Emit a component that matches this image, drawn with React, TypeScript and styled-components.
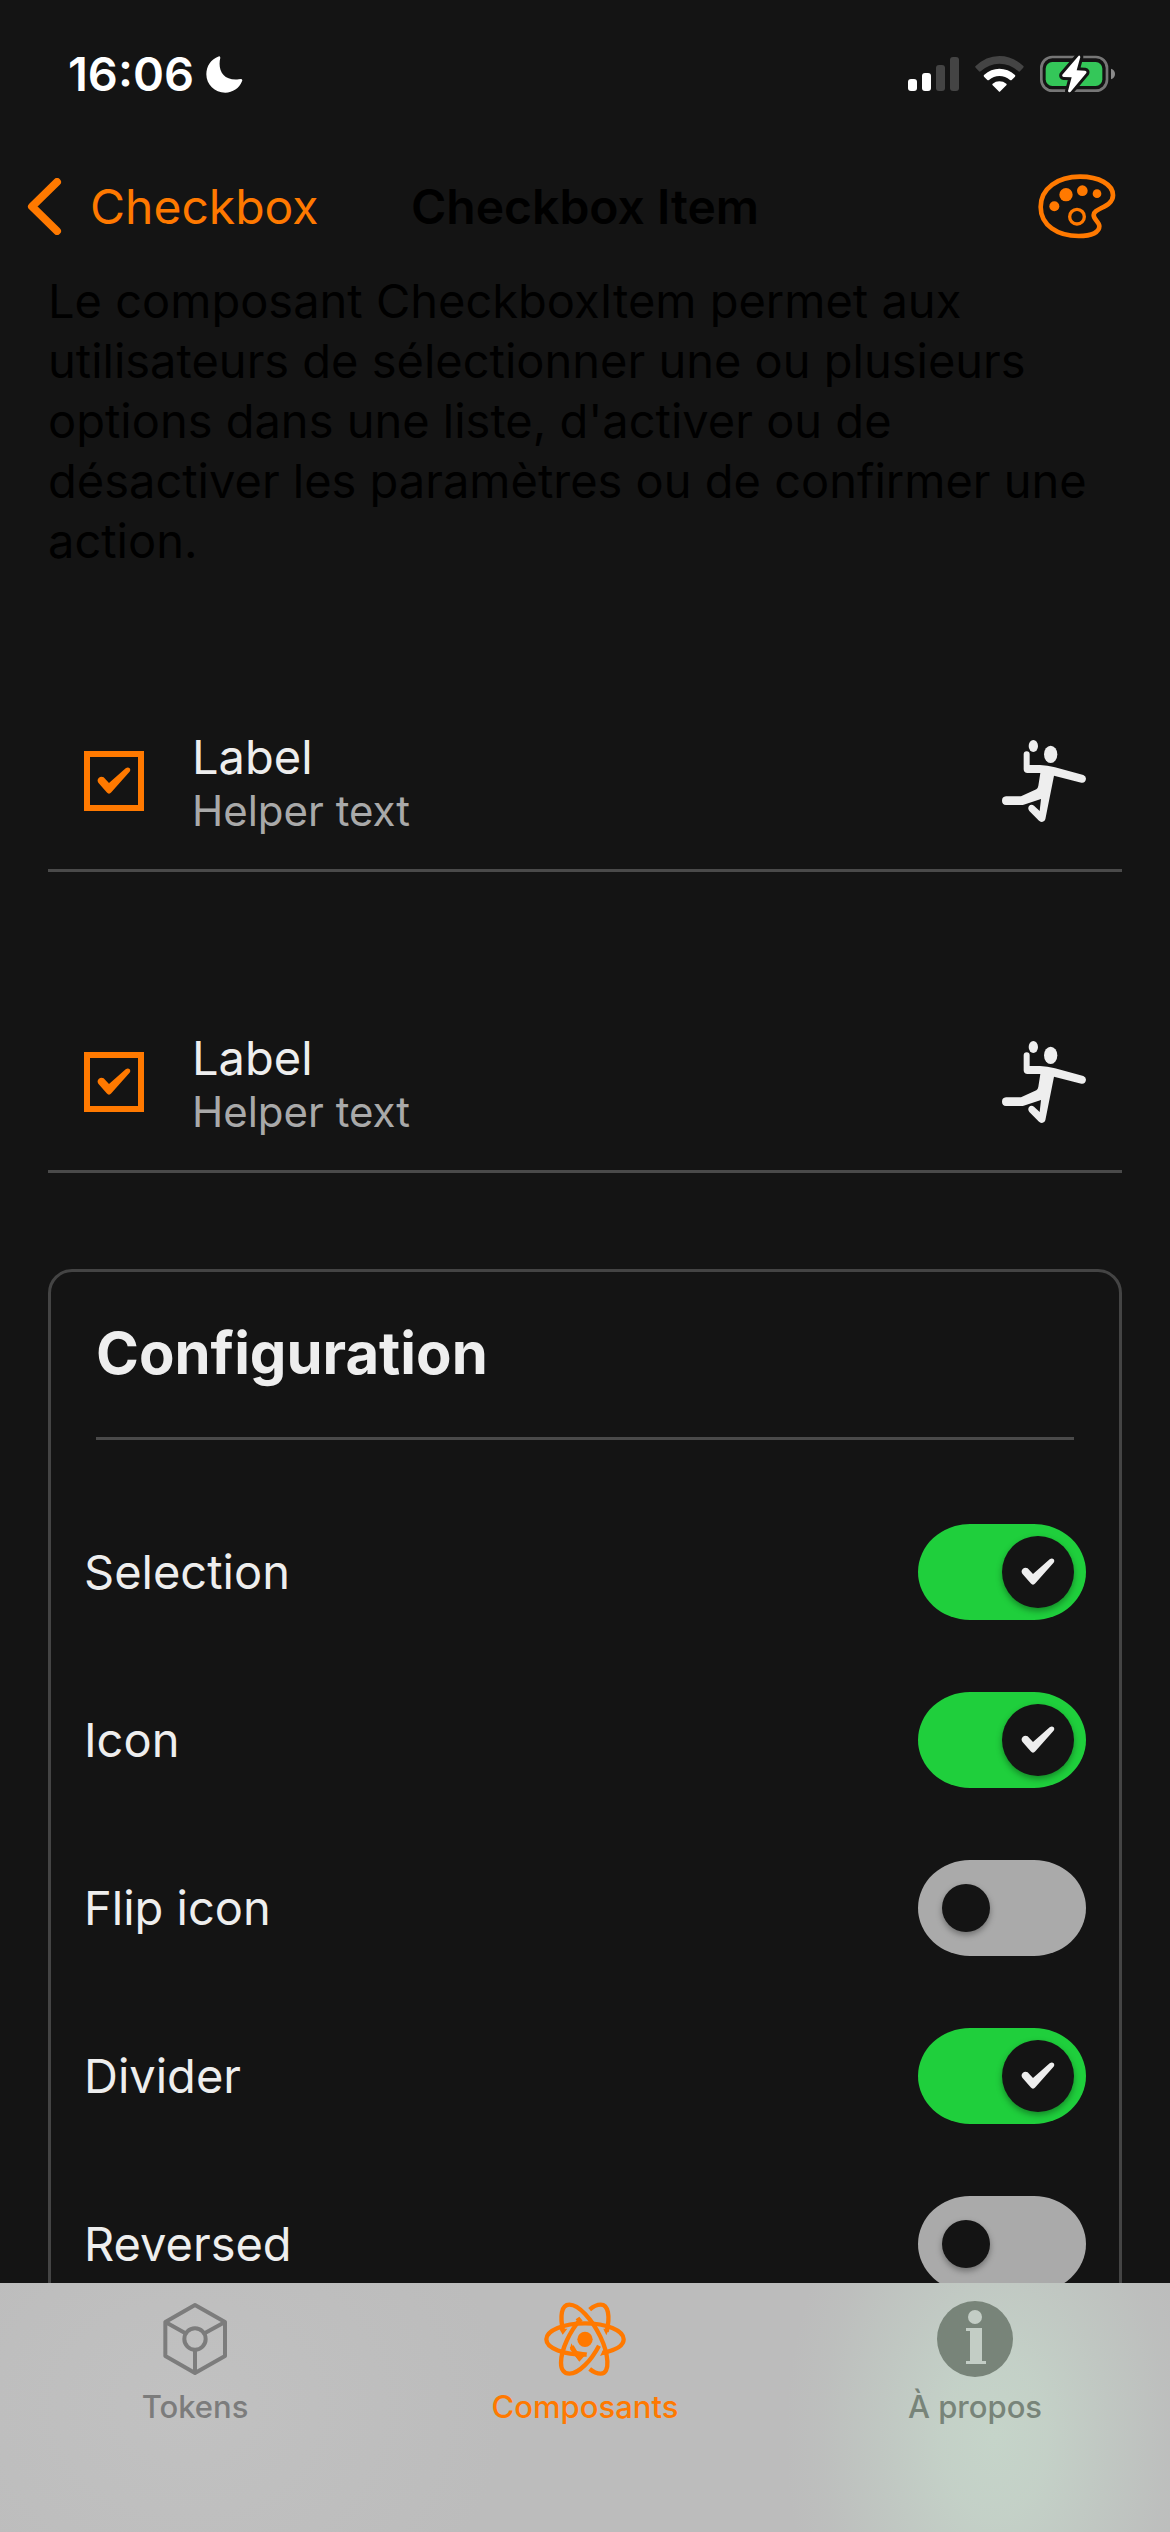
import React, { useState } from "react";
import styled, { createGlobalStyle } from "styled-components";

const color = {
  background: "#141414",
  content: "#eeeeee",
  muted: "#a9a9a9",
  divider: "#4a4a4a",
  border: "#444444",
  accent: "#ff7900",
  positive: "#1fcf3c",
  off: "#aaaaaa",
  tab: "#7c7c7c",
  tabOnGlow: "#788479",
};

const GlobalStyle = createGlobalStyle`
  *, *::before, *::after { box-sizing: border-box; }
  body {
    margin: 0;
    background: ${color.background};
    font-family: Inter, "Liberation Sans", sans-serif;
  }
  h1, h2, p { margin: 0; }
`;

const Screen = styled.div`
  display: flex;
  flex-direction: column;
  height: 100vh;
  overflow: hidden;
  background: ${color.background};
`;

const StatusBar = styled.header`
  display: flex;
  justify-content: space-between;
  align-items: center;
  padding: 44px 54px 0 68px;
  height: 104px;
`;

const StatusGroup = styled.div<{ $gap: number }>`
  display: flex;
  align-items: center;
  gap: ${(p) => p.$gap}px;
`;

const Clock = styled.time`
  color: #ffffff;
  font-size: 47px;
  font-weight: 600;
  line-height: 60px;
`;

const NavBar = styled.nav`
  display: grid;
  grid-template-columns: 1fr auto 1fr;
  align-items: center;
  height: 167px;
  padding: 38px 27px 0;
`;

const BackLink = styled.a`
  display: flex;
  align-items: center;
  gap: 28px;
  justify-self: start;
  color: ${color.accent};
  font-size: 48px;
  line-height: 60px;
  text-decoration: none;
`;

const PageTitle = styled.h1`
  color: #000000;
  font-size: 48px;
  font-weight: 600;
  line-height: 60px;
  white-space: nowrap;
`;

const ThemeButton = styled.button`
  justify-self: end;
  display: flex;
  margin-right: 27px;
  padding: 0;
  border: 0;
  background: none;
  cursor: pointer;
`;

const Content = styled.main`
  flex: 1;
  min-height: 0;
  overflow: hidden;
  padding: 0 48px;
`;

const Intro = styled.p`
  color: #000000;
  font-size: 47px;
  line-height: 60px;
`;

const ItemList = styled.div`
  display: flex;
  flex-direction: column;
  gap: 96px;
  padding: 96px 0;
`;

const Item = styled.label`
  display: flex;
  align-items: center;
  gap: 48px;
  height: 205px;
  padding: 26px 36px 0;
  border-bottom: 3px solid ${color.divider};
  cursor: pointer;
`;

const CheckStack = styled.span`
  display: grid;
  place-items: center;

  > * { grid-area: 1 / 1; }
  > svg { pointer-events: none; }
`;

const CheckInput = styled.input`
  appearance: none;
  width: 60px;
  height: 60px;
  margin: 0;
  border: 6px solid ${color.accent};
`;

const ItemText = styled.span`
  display: flex;
  flex: 1;
  flex-direction: column;
`;

const ItemLabel = styled.span`
  color: ${color.content};
  font-size: 47px;
  line-height: 60px;
`;

const ItemHelper = styled.span`
  color: ${color.muted};
  font-size: 42px;
  line-height: 48px;
`;

const Card = styled.section`
  border: 3px solid ${color.border};
  border-radius: 24px;
  padding: 45px 33px;
`;

const CardTitle = styled.h2`
  margin: 0 12px 48px;
  padding-bottom: 48px;
  border-bottom: 3px solid ${color.divider};
  color: ${color.content};
  font-size: 58px;
  font-weight: 700;
  line-height: 72px;
`;

const SwitchRow = styled.label`
  display: flex;
  align-items: center;
  justify-content: space-between;
  height: 168px;
  color: ${color.content};
  font-size: 47px;
  line-height: 60px;
  cursor: pointer;
`;

const SwitchStack = styled.span`
  display: grid;
  align-items: center;

  > * { grid-area: 1 / 1; }
`;

const SwitchInput = styled.input`
  appearance: none;
  width: 168px;
  height: 96px;
  margin: 0;
  border-radius: 52px / 48px;
  background: ${color.off};

  &:checked { background: ${color.positive}; }
`;

const Thumb = styled.span<{ $on: boolean }>`
  display: flex;
  align-items: center;
  justify-content: center;
  justify-self: ${(p) => (p.$on ? "end" : "start")};
  width: ${(p) => (p.$on ? 72 : 48)}px;
  height: ${(p) => (p.$on ? 72 : 48)}px;
  margin: 0 ${(p) => (p.$on ? 12 : 24)}px;
  border-radius: 50%;
  background: ${color.background};
  box-shadow: 0 3px 6px rgba(0, 0, 0, 0.35);
  pointer-events: none;
`;

const TabBar = styled.nav`
  display: grid;
  grid-template-columns: repeat(3, 1fr);
  flex: none;
  height: 249px;
  background:
    radial-gradient(
      ellipse 210px 320px at 85% 62%,
      rgba(197, 212, 201, 1) 0%,
      rgba(197, 212, 201, 0.85) 25%,
      rgba(197, 212, 201, 0.45) 55%,
      rgba(197, 212, 201, 0.12) 82%,
      rgba(197, 212, 201, 0) 100%
    ),
    radial-gradient(ellipse 320px 260px at 16% 50%, #c1c1c1 0%, rgba(193, 193, 193, 0) 100%),
    #bcbcbc;
`;

const Tab = styled.a<{ $tint: string }>`
  display: flex;
  flex-direction: column;
  align-items: center;
  gap: 12px;
  padding-top: 18px;
  color: ${(p) => p.$tint};
  font-size: 31px;
  font-weight: 500;
  line-height: 36px;
  text-decoration: none;
`;

const MoonIcon = () => (
  <svg width="37" height="37" viewBox="0 0 111 111" fill="#fff" aria-hidden="true">
    <path d="M36 2Q42-1 43 5C34 42 52 75 98 70Q101 69 104 69Q111 69 108 76C100 97 80 110 58 110C26 110 1 86 1 55C1 30 15 10 36 2Z" />
  </svg>
);

const SignalIcon = () => (
  <svg width="51" height="34" viewBox="0 0 51 34" aria-hidden="true">
    <rect x="0" y="22" width="9" height="12" rx="3" fill="#fff" />
    <rect x="14" y="16" width="9" height="18" rx="3" fill="#fff" />
    <rect x="28" y="8" width="9" height="26" rx="3" fill="#444" />
    <rect x="42" y="0" width="9" height="34" rx="3" fill="#444" />
  </svg>
);

const WifiIcon = () => (
  <svg width="49" height="36" viewBox="344 75 147 108" aria-hidden="true">
    <path d="M345 106Q377 75 417 75Q458 75 490 106Q490 109 488 111L479 121Q477 123 474 121Q449 98 417 98Q386 98 361 121Q358 123 356 121L346 110Q344 108 345 106Z" fill="#444" />
    <path d="M371 132Q392 113 417 113Q443 113 464 132Q466 134 464 137L454 147Q452 149 449 147Q435 135 417 135Q400 135 386 147Q383 149 381 147L371 137Q369 134 371 132Z" fill="#fff" />
    <path d="M397 158Q406 151 417 151Q429 151 438 158Q440 160 438 163L420 181Q417 184 415 181L397 163Q395 160 397 158Z" fill="#fff" />
  </svg>
);

const BatteryIcon = () => (
  <svg width="76" height="38" viewBox="540 75 228 114" aria-hidden="true">
    <rect x="544" y="81" width="197" height="101" rx="33" fill="none" stroke="#767676" strokeWidth="8" />
    <path d="M753 116Q765 120 765 132Q765 144 753 148Z" fill="#8a8a8a" />
    <rect x="557" y="96" width="170" height="72" rx="20" fill="#34c759" />
    <path d="M656 77L607 134Q605 140 611 141L635 142L624 183Q626 190 632 185L679 129Q681 123 675 122L650 121L661 81Q660 75 656 77Z" fill="#fff" stroke={color.background} strokeWidth="18" strokeLinejoin="round" paintOrder="stroke" />
  </svg>
);

const ChevronIcon = () => (
  <svg width="35" height="57" viewBox="0 0 35 57" fill="none" aria-hidden="true">
    <path d="M30 4L5 28.5L30 53" stroke={color.accent} strokeWidth="8" strokeLinecap="round" strokeLinejoin="round" />
  </svg>
);

const PaletteIcon = () => (
  <svg width="78" height="65" viewBox="533 434 234 195" fill={color.accent} aria-hidden="true">
    <path d="M659 442C592 442 541 477 541 533C541 588 592 620 655 620C696 620 717 608 717 591C717 577 700 571 700 557C700 536 758 534 758 498C758 465 716 442 659 442Z" fill="none" stroke={color.accent} strokeWidth="14" />
    <circle cx="582" cy="531" r="15" />
    <circle cx="617" cy="496" r="20" />
    <circle cx="666" cy="484" r="16" />
    <circle cx="710" cy="493" r="13" />
    <circle cx="650" cy="562" r="22" fill="none" stroke={color.accent} strokeWidth="10" />
  </svg>
);

const TickIcon = ({ fill }: { fill: string }) => (
  <svg width="34" height="28" viewBox="172 202 102 84" fill={fill} aria-hidden="true">
    <path d="M192 233L208 250L258 206Q265 201 270 206Q274 211 269 217L215 278Q208 286 201 278L176 249Q171 242 177 235Q184 228 192 233Z" />
  </svg>
);

const HandballIcon = () => (
  <svg width="84" height="84" viewBox="126 86 252 252" fill={color.content} aria-hidden="true">
    <ellipse cx="220" cy="107" rx="14" ry="18" />
    <ellipse cx="272" cy="132" rx="20" ry="26" />
    <path d="M191 132Q191 123 200 123Q209 123 209 132V164H240Q262 165 285 171L370 194Q378 197 378 205Q376 219 364 217L282 196L256 327Q254 335 246 335Q242 335 237 331L208 302Q202 295 207 287Q214 280 222 286L239 302L243 266L191 283Q188 284 184 284H138Q126 283 126 271Q126 259 138 258H183L229 237Q234 233 235 226L241 188H203Q191 188 191 177Z" />
  </svg>
);

const CubeIcon = () => (
  <svg width="76" height="76" viewBox="104 66 228 228" fill="none" stroke="currentColor" strokeWidth="12" strokeLinejoin="round" aria-hidden="true">
    <path d="M218 78L308 129V231L218 282L129 231V129ZM129 129L188 162M308 129L248 162M218 214V282" />
    <circle cx="218" cy="180" r="32" />
  </svg>
);

const AtomIcon = () => (
  <svg width="84" height="76" viewBox="69 65 252 228" fill="none" stroke="currentColor" strokeWidth="13" aria-hidden="true">
    <path d="M200 226C131 227 79 207 79 180C79 153 131 132 195 132C259 132 311 153 311 180C311 199 286 213 248 221" />
    <path d="M129 155C120 112 123 76 148 76C177 76 216 121 241 172C265 222 273 283 242 283Q226 283 209 269" />
    <path d="M181 120C150 155 123 211 123 250C123 272 133 283 148 283C177 283 214 243 237 199" />
    <path d="M209 91Q226 76 242 76C265 76 271 110 260 157" />
    <path d="M155 201Q164 219 181 239" />
    <g fill="currentColor" stroke="none">
      <circle cx="195" cy="180" r="23" />
      <path d="M118 148L142 148L128 166ZM250 148L267 148L259 168ZM167 120L178 112L188 124L176 132ZM150 210L154 192L166 214L202 220L178 247ZM240 230L249 212L264 222Z" />
    </g>
  </svg>
);

const InfoIcon = () => (
  <svg width="76" height="76" viewBox="0 0 76 76" aria-hidden="true">
    <circle cx="38" cy="38" r="38" fill="currentColor" />
    <circle cx="38" cy="16" r="7" fill="#c3cdc5" />
    <path d="M29 27H45V60H49V63H29V60H33V30H29Z" fill="#c3cdc5" />
  </svg>
);

const CheckboxItem = () => {
  const [checked, setChecked] = useState(true);
  return (
    <Item>
      <CheckStack>
        <CheckInput type="checkbox" checked={checked} onChange={() => setChecked(!checked)} />
        {checked && <TickIcon fill={color.accent} />}
      </CheckStack>
      <ItemText>
        <ItemLabel>Label</ItemLabel>
        <ItemHelper>Helper text</ItemHelper>
      </ItemText>
      <HandballIcon />
    </Item>
  );
};

const SwitchItem = ({ label, initial }: { label: string; initial: boolean }) => {
  const [on, setOn] = useState(initial);
  return (
    <SwitchRow>
      <span>{label}</span>
      <SwitchStack>
        <SwitchInput type="checkbox" role="switch" checked={on} onChange={() => setOn(!on)} />
        <Thumb $on={on}>{on && <TickIcon fill={color.content} />}</Thumb>
      </SwitchStack>
    </SwitchRow>
  );
};

const options = [
  { label: "Selection", initial: true },
  { label: "Icon", initial: true },
  { label: "Flip icon", initial: false },
  { label: "Divider", initial: true },
  { label: "Reversed", initial: false },
];

export default function App() {
  return (
    <Screen>
      <GlobalStyle />
      <StatusBar>
        <StatusGroup $gap={12}>
          <Clock>16:06</Clock>
          <MoonIcon />
        </StatusGroup>
        <StatusGroup $gap={16}>
          <SignalIcon />
          <WifiIcon />
          <BatteryIcon />
        </StatusGroup>
      </StatusBar>
      <NavBar>
        <BackLink href="#checkbox">
          <ChevronIcon />
          Checkbox
        </BackLink>
        <PageTitle>Checkbox Item</PageTitle>
        <ThemeButton type="button" aria-label="Palette">
          <PaletteIcon />
        </ThemeButton>
      </NavBar>
      <Content>
        <Intro>
          Le composant CheckboxItem permet aux utilisateurs de sélectionner une ou plusieurs options
          dans une liste, d'activer ou de désactiver les paramètres ou de confirmer une action.
        </Intro>
        <ItemList>
          <CheckboxItem />
          <CheckboxItem />
        </ItemList>
        <Card>
          <CardTitle>Configuration</CardTitle>
          {options.map((option) => (
            <SwitchItem key={option.label} {...option} />
          ))}
        </Card>
      </Content>
      <TabBar>
        <Tab href="#tokens" $tint={color.tab}>
          <CubeIcon />
          Tokens
        </Tab>
        <Tab href="#composants" $tint={color.accent} aria-current="page">
          <AtomIcon />
          Composants
        </Tab>
        <Tab href="#a-propos" $tint={color.tabOnGlow}>
          <InfoIcon />
          À propos
        </Tab>
      </TabBar>
    </Screen>
  );
}
